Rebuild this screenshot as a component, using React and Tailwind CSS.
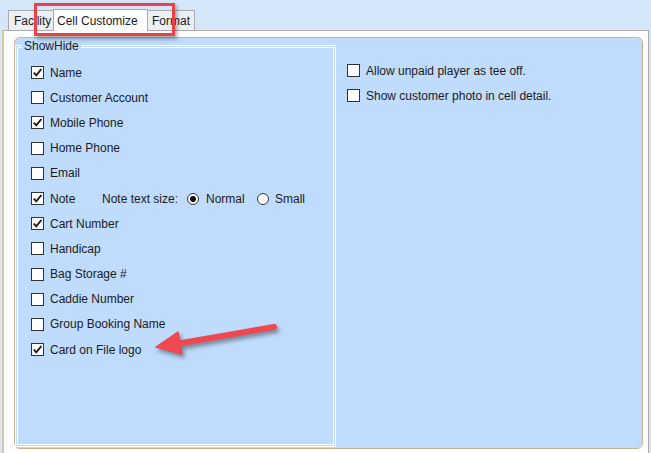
import React from 'react';

const font = { fontFamily: '"Liberation Sans", Arial, sans-serif' };

const Box = ({ checked }) => (
    <span className='w-[13px] h-[13px] shrink-0 border border-[#333333] bg-white flex items-center justify-center'>
        {checked && (
            <svg width='11' height='11' viewBox='0 0 11 11'>
                <path d='M1.8 5.6 L4.3 8.3 L9.4 2' fill='none' stroke='#1a1a1a' strokeWidth='1.9' />
            </svg>
        )}
    </span>
);

const Radio = ({ on }) => (
    <span className='w-[12px] h-[12px] shrink-0 rounded-full border border-[#333333] bg-white flex items-center justify-center'>
        {on && <span className='w-[6px] h-[6px] rounded-full bg-[#111111]' />}
    </span>
);

const Row = ({ checked, label }) => (
    <div className='h-[25.2px] flex items-center gap-[6px]'>
        <Box checked={checked} />
        <span>{label}</span>
    </div>
);

const items = [
    ['Name', true],
    ['Customer Account', false],
    ['Mobile Phone', true],
    ['Home Phone', false],
    ['Email', false],
    ['Note', true],
    ['Cart Number', true],
    ['Handicap', false],
    ['Bag Storage #', false],
    ['Caddie Number', false],
    ['Group Booking Name', false],
    ['Card on File logo', true],
];

export default function App() {
    return (
        <div className='w-[651px] h-[453px] bg-[#d5e6fb] relative overflow-hidden flex flex-col text-[12px] text-[#1b1b1b]' style={font}>
            {/* tabs */}
            <div className='h-[30px] flex items-end pl-[8px] shrink-0'>
                <div className='h-[20px] w-[46px] border border-b-0 border-[#acacac] bg-[#eceff4] pl-[5px] flex items-center'>Facility</div>
                <div className='h-[22px] w-[95px] border border-b-0 border-[#acacac] bg-white pl-[3px] flex items-center -ml-[1px] relative top-[1px]'>Cell Customize</div>
                <div className='h-[20px] w-[47px] border border-b-0 border-l-0 border-[#acacac] bg-[#eceff4] pl-[4px] flex items-center'>Format</div>
            </div>

            {/* tab page */}
            <div className='flex-1 ml-[2px] mr-[2px] bg-white border-t border-r border-[#acacac] border-l-[2px] border-l-[#d6c89f] pt-[6px] pl-[10px] pr-[5px] pb-[4px] flex'>
                <div className='flex-1 bg-[#bfdbfd] border border-[#c8b68e] rounded-[6px] flex'>
                    <fieldset className='w-[321px] mt-[1px] mb-[1px] border-[3px] border-double border-white pl-[13px] pt-[6px]'>
                        <legend className='-ml-[9px] px-[2px] leading-[15px]'>ShowHide</legend>
                        {items.map(([label, checked]) =>
                            label === 'Note' ? (
                                <div key={label} className='h-[25.2px] flex items-center'>
                                    <Box checked />
                                    <span className='ml-[6px] w-[52px]'>Note</span>
                                    <span className='w-[85px]'>Note text size:</span>
                                    <Radio on />
                                    <span className='ml-[7px] w-[51px]'>Normal</span>
                                    <Radio />
                                    <span className='ml-[6px]'>Small</span>
                                </div>
                            ) : (
                                <Row key={label} label={label} checked={checked} />
                            )
                        )}
                    </fieldset>
                    <div className='pl-[11px] pt-[20px] flex flex-col'>
                        <div className='h-[25px] flex items-center gap-[6px]'>
                            <Box />
                            <span>Allow unpaid player as tee off.</span>
                        </div>
                        <div className='h-[25px] flex items-center gap-[6px]'>
                            <Box />
                            <span>Show customer photo in cell detail.</span>
                        </div>
                    </div>
                </div>
            </div>

            {/* annotation: red box around tab */}
            <div className='absolute left-[34px] top-[3px] w-[141px] h-[33px] border-[3px] border-[#e8434b] shadow-[2px_3px_4px_rgba(0,0,0,0.35)]' />

            {/* annotation: arrow */}
            <svg className='absolute left-0 top-0 drop-shadow-[2px_3px_2px_rgba(0,0,0,0.4)]' width='651' height='453' viewBox='0 0 651 453'>
                <line x1='274' y1='327' x2='176' y2='344' stroke='#ef4850' strokeWidth='6' strokeLinecap='round' />
                <polygon points='156,347 178,332 182,354' fill='#ef4850' stroke='#ef4850' strokeWidth='1.5' strokeLinejoin='round' />
            </svg>
        </div>
    );
}
